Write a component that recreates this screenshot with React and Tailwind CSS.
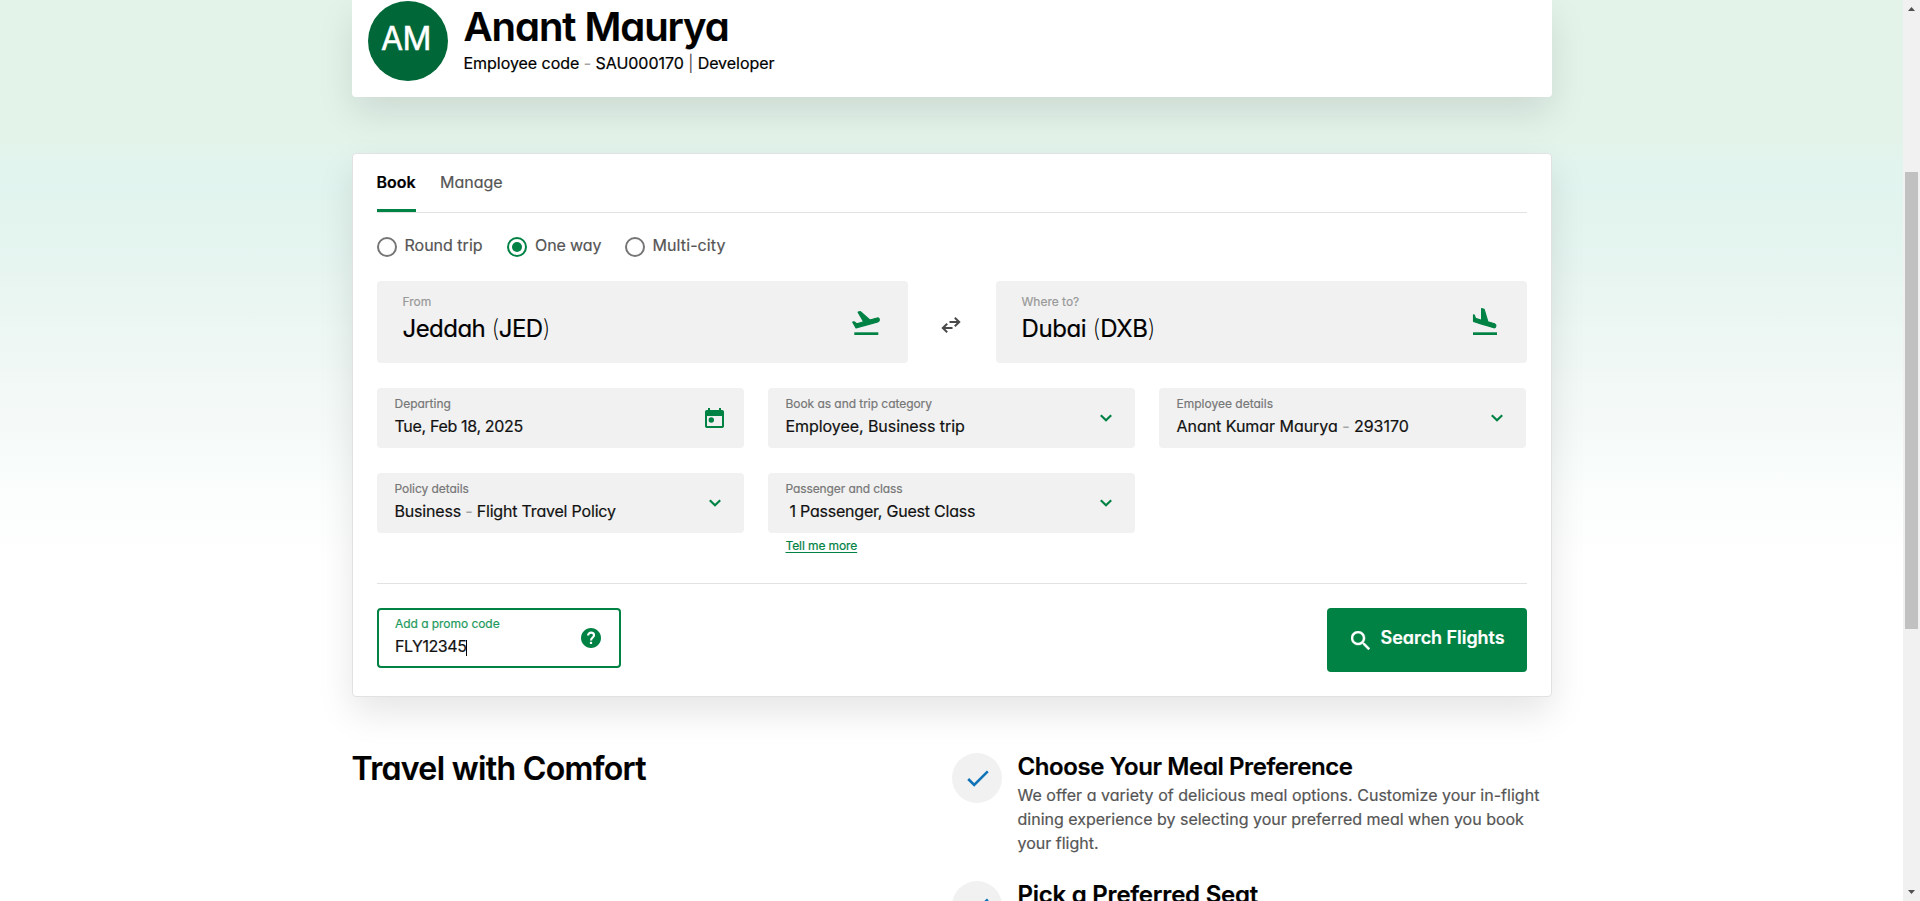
const chevron = (
  <svg width="12" height="8" viewBox="0 0 12 8" fill="none" className="relative left-px block">
    <path d="M.8 1.200l5.200 5 5.200-5" stroke="#008244" strokeWidth="2.200" />
  </svg>
);

const calendar = (
  <svg width="19" height="20" viewBox="0 0 19 20" fill="#008244" className="relative left-px block">
    <path
      fillRule="evenodd"
      d="M3 0h2v2h9V0h2v2h1.200a1.800 1.800 0 0 1 1.800 1.800v14.400a1.800 1.800 0 0 1-1.800 1.800H1.800A1.800 1.800 0 0 1 0 18.200V3.800A1.800 1.800 0 0 1 1.800 2H3zM2 8v10h15V8z"
    />
    <circle cx="6.300" cy="12" r="2.700" />
  </svg>
);

function TakeoffIcon() {
  return (
    <svg width="28" height="24" viewBox="0 0 28 24" fill="#008244" className="block overflow-visible">
      <path
        transform="scale(1.36) translate(-1.81 -3.57)"
        stroke="#008244"
        strokeWidth="0.9"
        strokeLinejoin="round"
        d="M21.800 9.640c-.21-.8-.9-1.080-1.600-.86L14.920 10.200l-6.900-6.200-1.700.41 4.140 7.170-5.200 1.430-1.970-1.540-.9.290 2.400 4.190s7.120-1.900 16.000-4.430c.81-.23 1.200-1.050 1.010-1.880z"
      />
      <path d="M2.300 21.300h24v2.700h-24z" />
    </svg>
  );
}

function LandingIcon() {
  return (
    <svg width="24" height="27" viewBox="2.770 2 19.100 19" preserveAspectRatio="none" fill="#008244" className="block overflow-visible">
      <path d="M2.770 19.100h19.100V21H2.770z" />
      <path
        stroke="#008244"
        strokeWidth="0.9"
        strokeLinejoin="round"
        d="M9.680 13.270l4.350 1.160 5.310 1.420c.8.21 1.420-.26 1.640-1.060.21-.8-.26-1.420-1.060-1.640l-5.310-1.420L11.600 2.900 9.600 2.400v8.280L4.800 9.350l-.93-2.320-.7-.19v4.570l1.200.43z"
      />
    </svg>
  );
}

function SwapIcon() {
  return (
    <svg width="20" height="16" viewBox="0 0 20 16" fill="none" stroke="#4a4a4a" strokeWidth="2" className="relative -left-[0.500px] block">
      <path d="M8.500 5H18M13.800.8L18.200 5l-4.400 4.200M11.500 11H2M6.200 6.800L1.800 11l4.400 4.200" />
    </svg>
  );
}

// Hyphens and brackets are set lighter than the words around them.
function Soft({ text }) {
  return text.split(/( - |[()|])/).map((part, i) =>
    part === " - " ? (
      <span key={i} className="text-[#a3a3a3]">
        {part}
      </span>
    ) : part === "(" || part === ")" ? (
      <span key={i} className="font-extralight [-webkit-text-stroke:0px]">
        {part}
      </span>
    ) : part === "|" ? (
      <span key={i} className="font-light text-[#444]">
        {part}
      </span>
    ) : (
      part
    )
  );
}

function Radio({ label, checked, labelClass }) {
  return (
    <div className="flex items-center gap-2">
      <span
        className={
          "flex size-5 items-center justify-center rounded-full border-2 bg-white " +
          (checked ? "border-[#008244]" : "border-[#767676]")
        }
      >
        {checked && <span className="size-[10px] rounded-full bg-[#008244]" />}
      </span>
      <span className={"-mt-[5px] leading-6 whitespace-nowrap text-[#555] " + labelClass}>{label}</span>
    </div>
  );
}

function Field({ label, value, valueClass = "", labelClass = "", icon = chevron }) {
  return (
    <div className="flex h-[60px] items-center justify-between rounded bg-[#f1f1f1] pr-[20px] pl-[18px]">
      <div className="flex h-full flex-col pt-[8px]">
        <span className={"text-xs leading-4 text-[#777] " + labelClass}>{label}</span>
        <span className={"mt-[4px] text-base leading-5 whitespace-pre text-[#111] " + valueClass}>
          <Soft text={value} />
        </span>
      </div>
      <div className="flex w-[20px] justify-center">{icon}</div>
    </div>
  );
}

function Benefit({ title, titleClass, children }) {
  return (
    <div className="flex gap-4">
      <div className="flex size-[50px] shrink-0 items-center justify-center rounded-full bg-[#f1f1f1]">
        <svg width="22" height="17" viewBox="0 0 22 17" fill="none" className="relative left-px block">
          <path d="M1.200 9l6 6L20.800 1.400" stroke="#0f73b8" strokeWidth="2.600" />
        </svg>
      </div>
      <div>
        <h3 className={"text-2xl leading-[28px] font-semibold whitespace-nowrap " + titleClass}>{title}</h3>
        <p className="mt-[2px] text-base leading-6 text-[#555]">{children}</p>
      </div>
    </div>
  );
}

export default function App() {
  return (
    <div className="flex h-[901px] w-full overflow-hidden bg-white font-['Inter',sans-serif] text-black [-webkit-text-stroke:0.2px] [font-feature-settings:'cv11']">
      <main className="flex h-full flex-1 flex-col items-center bg-[linear-gradient(to_bottom,#e3f3ea_0px,#e3f3ea_140px,#e1f4ee_165px,#e4f4ef_241px,#eef7f4_345px,#f5faf8_425px,#fbfefc_506px,#ffffff_570px)]">
        <section className="flex h-[97px] w-[1200px] shrink-0 items-start gap-[16px] rounded-b bg-white pt-px pl-4 shadow-[0_16px_36px_rgba(0,0,0,0.1)]">
          <div className="flex size-20 items-center justify-center rounded-full bg-[#006838]">
            <span className="relative -top-[2.500px] -left-[1.500px] text-[32px] leading-10 tracking-[-0.4px] text-white [-webkit-text-stroke:0.500px]">
              AM
            </span>
          </div>
          <div>
            <h1 className="pt-[2px] text-[40px] leading-[48px] font-semibold tracking-[-1.050px]">Anant Maurya</h1>
            <p className="text-base leading-6 tracking-[-0.04px]">
              <Soft text="Employee code - SAU000170 | Developer" />
            </p>
          </div>
        </section>

        <section className="mt-14 flex h-[544px] w-[1200px] shrink-0 flex-col rounded border border-[#e2e2e2] bg-white px-6 shadow-[0_16px_36px_rgba(0,0,0,0.1)]">
          <nav className="flex h-[59px] shrink-0 gap-6 border-b border-[#e2e2e2]">
            <span className="w-[39px] border-b-[3px] border-[#008244] pt-[16px] leading-6 font-semibold whitespace-nowrap">
              Book
            </span>
            <span className="pt-[16px] pl-[0.500px] leading-6 text-[#555]">Manage</span>
          </nav>

          <div className="mt-[22px] flex h-6 gap-[24px]">
            <Radio label="Round trip" labelClass="w-[78px]" />
            <Radio label="One way" checked labelClass="w-[66px] pl-[0.500px] tracking-[-0.1px]" />
            <Radio label="Multi-city" labelClass="tracking-[0.1px]" />
          </div>

          <div className="mt-[22px] flex justify-between">
            <div className="flex h-[82px] w-[531px] justify-between rounded bg-[#f1f1f1] pr-[28px] pl-[26px]">
              <div className="flex flex-col pt-[13px]">
                <span className="text-xs leading-4 text-[#999]">From</span>
                <span className="mt-[3px] text-2xl leading-8 tracking-[-0.55px]">
                  <Soft text="Jeddah (JED)" />
                </span>
              </div>
              <div className="pt-[30px]">
                <TakeoffIcon />
              </div>
            </div>
            <div className="flex items-center pt-[5px]">
              <SwapIcon />
            </div>
            <div className="flex h-[82px] w-[531px] justify-between rounded bg-[#f1f1f1] pr-[30px] pl-[26px]">
              <div className="flex flex-col pt-[13px]">
                <span className="text-xs leading-4 text-[#999]">Where to?</span>
                <span className="mt-[3px] text-2xl leading-8 tracking-[-0.4px]">
                  <Soft text="Dubai (DXB)" />
                </span>
              </div>
              <div className="pt-[27px]">
                <LandingIcon />
              </div>
            </div>
          </div>

          <div className="mt-[25px] mr-px grid grid-cols-3 gap-x-6 gap-y-[25px]">
            <Field label="Departing" value="Tue, Feb 18, 2025" valueClass="tracking-[-0.33px]" icon={calendar} />
            <Field
              label="Book as and trip category"
              value="Employee, Business trip"
              labelClass="tracking-[-0.05px]"
              valueClass="tracking-[-0.06px]"
            />
            <Field label="Employee details" value="Anant Kumar Maurya - 293170" valueClass="tracking-[-0.04px]" />
            <Field
              label="Policy details"
              value="Business - Flight Travel Policy"
              labelClass="tracking-[-0.05px]"
              valueClass="tracking-[-0.19px]"
            />
            <div>
              <Field
                label="Passenger and class"
                value="1 Passenger, Guest Class"
                labelClass="tracking-[-0.1px]"
                valueClass="pl-[4px] tracking-[-0.22px]"
              />
              <a className="mt-[5px] ml-[18px] block text-xs leading-4 tracking-[-0.1px] text-[#008244] underline underline-offset-2">
                Tell me more
              </a>
            </div>
          </div>

          <div className="mt-[29px] flex justify-between border-t border-[#e2e2e2] pt-6">
            <div className="flex h-[60px] w-[244px] items-center justify-between rounded border-2 border-[#008244] pr-[18px] pl-[16.500px]">
              <div className="flex h-full flex-col pt-[6px]">
                <span className="text-xs leading-4 tracking-[-0.05px] text-[#1f9a5e]">Add a promo code</span>
                <span className="mt-[4px] flex items-center text-base leading-5 tracking-[-0.45px] text-[#111]">
                  FLY12345
                  <span className="relative top-[1.500px] h-4 w-px bg-black" />
                </span>
              </div>
              <svg width="20" height="20" viewBox="2 2 20 20" className="block" fill="#008244">
                <path d="M12 2C6.480 2 2 6.480 2 12s4.480 10 10 10 10-4.480 10-10S17.520 2 12 2z" />
                <g fill="none" stroke="#fff" strokeWidth="2.200">
                  <path d="M9.100 9.600c0-1.800 1.300-2.900 2.950-2.900s2.950 1 2.950 2.550c0 2.250-2.950 2.350-2.950 5.150" />
                  <path d="M12 15.800V18" />
                </g>
              </svg>
            </div>
            <button className="flex h-16 w-[200px] items-center rounded bg-[#008244] pl-6 text-lg font-semibold text-white">
              <svg width="19" height="19" viewBox="3 3 17.490 17.490" className="block" fill="#fff" stroke="#fff" strokeWidth="0.300">
                <path d="M15.500 14h-.79l-.28-.27C15.410 12.590 16 11.110 16 9.500 16 5.910 13.090 3 9.500 3S3 5.910 3 9.500 5.910 16 9.500 16c1.610 0 3.090-.59 4.230-1.570l.27.28v.79l5 4.990L20.490 19l-4.990-5zm-6 0C7.010 14 5 11.990 5 9.500S7.010 5 9.500 5 14 7.010 14 9.500 11.990 14 9.500 14z" />
              </svg>
              <span className="-mt-[5px] ml-[11px] tracking-[-0.05px] whitespace-nowrap">Search Flights</span>
            </button>
          </div>
        </section>

        <section className="mt-14 flex w-[1200px] shrink-0 justify-between">
          <h2 className="h-9 pt-px text-[32px] leading-[30px] font-semibold tracking-[-0.65px] whitespace-nowrap">
            Travel with Comfort
          </h2>
          <div className="flex w-[600px] flex-col gap-[26px]">
            <Benefit title="Choose Your Meal Preference" titleClass="tracking-[-0.4px]">
              <span className="tracking-[0.02px]">We offer a variety of delicious meal options. Customize your in-flight</span>
              <br />
              dining experience by selecting your preferred meal when you book
              <br />
              your flight.
            </Benefit>
            <Benefit title="Pick a Preferred Seat" titleClass="tracking-[-0.23px]" />
          </div>
        </section>
      </main>

      <aside className="flex w-[17px] shrink-0 flex-col items-center bg-[#f1f1f1]">
        <svg width="7" height="4" viewBox="0 0 7 4" className="mt-[7px] block shrink-0" fill="#505050">
          <path d="M0 4L3.500 0 7 4z" />
        </svg>
        <div className="mt-[161px] h-[457px] w-[13px] shrink-0 bg-[#c1c1c1]" />
        <svg width="7" height="4" viewBox="0 0 7 4" className="mt-auto mb-[7px] block shrink-0" fill="#505050">
          <path d="M0 0l3.500 4L7 0z" />
        </svg>
      </aside>
    </div>
  );
}
